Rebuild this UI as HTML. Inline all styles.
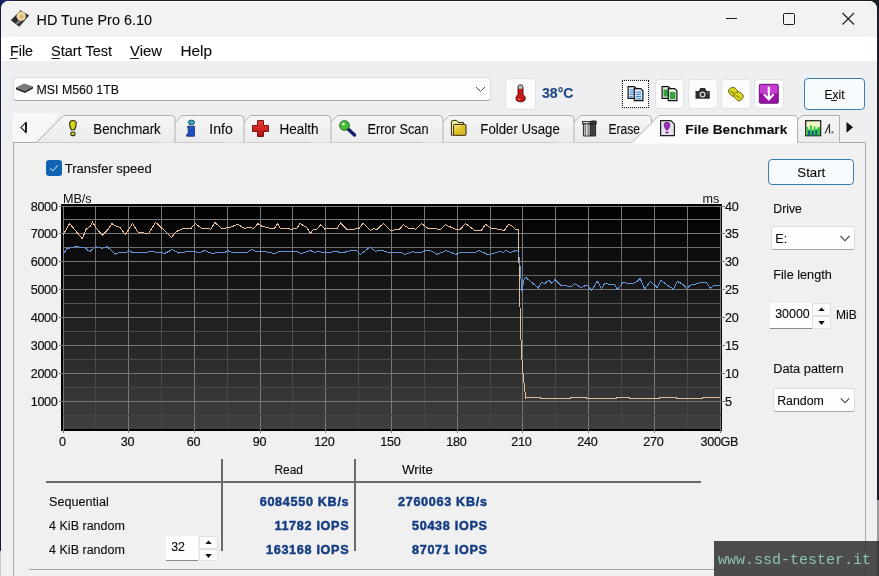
<!DOCTYPE html>
<html><head><meta charset="utf-8">
<style>
*{margin:0;padding:0;box-sizing:border-box}
html,body{width:879px;height:576px;overflow:hidden;background:#1b1d27;font-family:"Liberation Sans",sans-serif}
.a{position:absolute}
#win{position:absolute;left:1px;top:1px;width:876px;height:575px;background:#f0f0f0;border-radius:8px 8px 0 0;overflow:hidden}
.btn{position:absolute;background:#fcfcfc;border:1px solid #e1e1e1;border-radius:4px}
.combo{position:absolute;background:#fefefe;border:1px solid #dcdcdc;border-bottom-color:#a8a8a8;border-radius:3px}
svg{position:absolute;left:0;top:0;overflow:visible}
</style></head><body>
<div class="a" style="left:0;top:0;width:14px;height:14px;background:#1a2570"></div>
<div class="a" style="left:0;top:0;width:1px;height:551px;background:#141a3a"></div>
<div id="win">
 <div class="a" style="left:0;top:0;width:876px;height:36px;background:#f2f2f2;border-top:1px solid #fdfdfd"></div>
 <div class="a" style="left:0;top:36px;width:876px;height:24px;background:#ffffff"></div>
 <div class="a" style="left:0;top:60px;width:876px;height:82px;background:#eeeff1"></div>
</div>
<div class="a" style="left:0;top:551px;width:1px;height:25px;background:#c8c8c8"></div>
<div class="a" style="left:877px;top:500px;width:2px;height:41px;background:#9a9ca0"></div>

<!-- drive combo -->
<div class="combo" style="left:13px;top:77px;width:478px;height:24px"></div>
<!-- thermometer button -->
<div class="btn" style="left:505px;top:78px;width:31px;height:32px"></div>
<!-- toolbar buttons -->
<div class="btn" style="left:621px;top:79px;width:29px;height:30px"></div>
<div class="a" style="left:622px;top:80px;width:27px;height:28px;border:1px dotted #111"></div>
<div class="btn" style="left:655px;top:79px;width:29px;height:30px"></div>
<div class="btn" style="left:688px;top:79px;width:30px;height:30px"></div>
<div class="btn" style="left:721px;top:79px;width:30px;height:30px"></div>
<div class="btn" style="left:754px;top:79px;width:30px;height:30px"></div>
<!-- exit -->
<div class="a" style="left:804px;top:78px;width:61px;height:32px;border:1px solid #3a7fae;border-radius:4px;background:#f8fbfd"></div>

<!-- panel border -->
<div class="a" style="left:13px;top:142px;width:1px;height:434px;background:#adadad"></div>
<div class="a" style="left:865px;top:142px;width:1px;height:434px;background:#adadad"></div>

<!-- checkbox -->
<div class="a" style="left:46px;top:160px;width:16px;height:16px;background:#0f64b6;border-radius:3px"></div>

<!-- right controls -->
<div class="a" style="left:768px;top:159px;width:86px;height:26px;border:1px solid #3a7fae;border-radius:4px;background:#f8fbfd"></div>
<div class="combo" style="left:771px;top:226px;width:84px;height:24px"></div>
<div class="a" style="left:770px;top:303px;width:42px;height:26px;background:#fefefe;border-bottom:1px solid #8a8a8a"></div>
<div class="btn" style="left:812px;top:303px;width:19px;height:13px;border-radius:2px"></div>
<div class="btn" style="left:812px;top:316px;width:19px;height:13px;border-radius:2px"></div>
<div class="combo" style="left:773px;top:388px;width:82px;height:24px"></div>

<!-- results table boxes -->
<div class="a" style="left:46px;top:481px;width:655px;height:2px;background:#6b6b6b"></div>
<div class="a" style="left:221px;top:459px;width:2px;height:92px;background:#6b6b6b"></div>
<div class="a" style="left:354px;top:459px;width:2px;height:92px;background:#6b6b6b"></div>
<div class="a" style="left:166px;top:536px;width:32px;height:25px;background:#fefefe;border-bottom:1px solid #8a8a8a"></div>
<div class="btn" style="left:199px;top:536px;width:19px;height:13px;border-radius:2px"></div>
<div class="btn" style="left:199px;top:549px;width:19px;height:12px;border-radius:2px"></div>
<div class="a" style="left:29px;top:569px;width:836px;height:1px;background:#a5a5a5"></div>

<svg width="879" height="576" viewBox="0 0 879 576" style="will-change:transform">
 <defs>
  <linearGradient id="tg" x1="0" y1="0" x2="0" y2="1"><stop offset="0" stop-color="#f6f6f6"/><stop offset="1" stop-color="#ebebeb"/></linearGradient>
  <linearGradient id="cg" x1="0" y1="0" x2="0" y2="1"><stop offset="0" stop-color="#000"/><stop offset="1" stop-color="#3f3f3f"/></linearGradient>
  <linearGradient id="mg" gradientUnits="userSpaceOnUse" x1="0" y1="206" x2="0" y2="429"><stop offset="0" stop-color="#7a7a7a"/><stop offset="0.3" stop-color="#666666"/><stop offset="0.5" stop-color="#4e4e4e"/><stop offset="1" stop-color="#444444"/></linearGradient>
  <linearGradient id="crossg" x1="0" y1="0" x2="0" y2="1"><stop offset="0" stop-color="#f03838"/><stop offset="1" stop-color="#b01010"/></linearGradient>
  <linearGradient id="foldg" x1="0" y1="0" x2="1" y2="1"><stop offset="0" stop-color="#f6ee90"/><stop offset="0.5" stop-color="#e2c020"/><stop offset="1" stop-color="#d8b840"/></linearGradient>
  <linearGradient id="trashg" x1="0" y1="0" x2="1" y2="0"><stop offset="0" stop-color="#a0a0a0"/><stop offset="0.3" stop-color="#f4f4f4"/><stop offset="0.5" stop-color="#9a9a9a"/><stop offset="0.58" stop-color="#3a3a3a"/><stop offset="1" stop-color="#505050"/></linearGradient>
 </defs>

 <!-- title icon -->
 <path d="M11.1 20.2 L20.5 10.6 L28.8 15.6 L19.3 26.4 Z" fill="#2a2a2a" stroke="#3a3a3a" stroke-width="0.6" stroke-linejoin="round"/>
 <ellipse cx="18.6" cy="22" rx="3.2" ry="1.4" transform="rotate(-40 18.6 22)" fill="#9a9a9a" opacity="0.75"/>
 <circle cx="21.2" cy="16.3" r="4.7" fill="#ead49c"/>
 <circle cx="21.6" cy="16.6" r="1.7" fill="#cdb070"/>
 <!-- window controls -->
 <path d="M726 18.5 H737" stroke="#1c1c1c" stroke-width="1"/>
 <rect x="783.5" y="13.5" width="11" height="11" rx="1" fill="none" stroke="#1c1c1c" stroke-width="1"/>
 <path d="M842.5 13 L854 24.5 M854 13 L842.5 24.5" stroke="#1c1c1c" stroke-width="1.1"/>
 <!-- menu underlines -->
 <path d="M10 58.5 H17.5 M51.5 58.5 H60 M130 58.5 H139" stroke="#222" stroke-width="1"/>

 <!-- drive icon -->
 <g transform="translate(16,83)">
  <path d="M0 4.5 L8 0.5 L17 3.5 L9 8 Z" fill="#7a7a7a"/>
  <path d="M0 4.5 L9 8 L17 3.5 L17 5.5 L9 10 L0 6.5 Z" fill="#2a2a2a"/>
 </g>
 <path d="M476 87 L480.5 91.5 L485 87" stroke="#4a4a4a" stroke-width="1" fill="none"/>

 <!-- thermometer -->
 <g>
  <path d="M518 87 Q518 84.8 520.5 84.8 Q523 84.8 523 87 V94.5 Q525.3 96 525.3 98.2 Q525.3 101.8 520.6 101.8 Q516 101.8 516 98.2 Q516 96 518 94.5 Z" fill="#c81818" stroke="#4a0808" stroke-width="0.9"/>
  <rect x="518.6" y="85.5" width="3.8" height="3.2" fill="#8ed8d0"/>
  <path d="M518.8 98.5 L520 100" stroke="#f0c0c0" stroke-width="1"/>
 </g>
 <!-- copy icon -->
 <g transform="translate(627.5,86)">
  <path d="M0.6 0.6 H6.8 L8.8 2.6 V12.4 H0.6 Z" fill="#d8e8f8" stroke="#111" stroke-width="1.2"/>
  <path d="M2.2 4 H7 M2.2 6.2 H7 M2.2 8.4 H7 M2.2 10.6 H5" stroke="#3a80d0" stroke-width="1"/>
  <path d="M6.8 2.6 H13.2 L15.4 4.8 V14.6 H6.8 Z" fill="#d8e8f8" stroke="#111" stroke-width="1.2"/>
  <path d="M8.4 6.2 H13.6 M8.4 8.4 H13.6 M8.4 10.6 H13.6 M8.4 12.8 H13.6" stroke="#3a80d0" stroke-width="1"/>
 </g>
 <g transform="translate(661.5,86)">
  <path d="M0.6 0.6 H6.8 L8.8 2.6 V12.4 H0.6 Z" fill="#e8f0e0" stroke="#111" stroke-width="1.2"/>
  <rect x="2" y="3.5" width="5.4" height="7" fill="#38a040"/>
  <path d="M6.8 2.6 H13.2 L15.4 4.8 V14.6 H6.8 Z" fill="#e8f0e0" stroke="#111" stroke-width="1.2"/>
  <rect x="8.3" y="6" width="5.6" height="7.2" fill="#38a040"/>
 </g>
 <!-- camera -->
 <g transform="translate(695,87.5)">
  <path d="M0.5 3.5 H3.8 L5.3 0.5 H10 L11.5 3.5 H14.8 V11.2 H0.5 Z" fill="#2c2c2c"/>
  <circle cx="7.6" cy="7" r="3" fill="#d6d6d6"/><circle cx="7.6" cy="7" r="1.7" fill="#2c2c2c"/>
  <rect x="12" y="4.8" width="1.6" height="1.2" fill="#50c050"/>
 </g>
 <!-- yellow tool -->
 <g transform="translate(727.5,86.5)" stroke="#5a5a10" stroke-width="0.9" fill="#dcd620">
  <path d="M1 5.5 Q0.5 3 3 1.5 Q5.5 0 7.5 1.5 L10 4 Q11 6 9 8 L7.5 9.5 Q5 10.5 3.5 8.5 Z"/>
  <path d="M6.5 10 Q6 7.5 8.5 6 Q11 4.5 13 6 L15.5 8.5 Q16.5 10.5 14.5 12.5 L13 14 Q10.5 15 9 13 Z"/>
  <path d="M3 4.5 L6.5 7 M9 9 L12.5 11.5" stroke="#8a8a10" stroke-width="1.1"/>
 </g>
 <!-- purple download -->
 <g transform="translate(758.8,83.8)">
  <rect x="0.5" y="0.5" width="19" height="19" rx="1.2" fill="#9a10a8" stroke="#5a0868" stroke-width="0.8"/>
  <rect x="1.2" y="1.2" width="17.6" height="8.5" fill="#c43cd0"/>
  <path d="M10 3 V15.2 M5.2 10.4 L10 15.6 L14.8 10.4" stroke="#fff" stroke-width="2.2" fill="none"/>
 </g>
 <path d="M831 100.5 H837" stroke="#222" stroke-width="1"/>

 <!-- tab strip -->
 <path d="M13.5 142.5 H865.5" stroke="#acacac"/>
 <path d="M13 113 H60 L36 142 H13 Z" fill="#f8f8f8"/>
 <path d="M25.8 122.6 L20.9 127.4 L25.8 132.4 Z" fill="none" stroke="#1a1a1a" stroke-width="1.1"/><path d="M26 122.4 V132.6" stroke="#111" stroke-width="1.8"/>
 <path d="M797.5 142.5 V120 L802 115.5 H839.5 V142.5" fill="url(#tg)" stroke="#b0b0b0"/>
 <path d="M553.5 142.5 L581 115.5 H648 Q651.5 115.5 651.5 119 V142.5" fill="url(#tg)" stroke="#b0b0b0"/>
 <path d="M422 142.5 L449.5 115.5 H570 Q574 115.5 574 119 V142.5" fill="url(#tg)" stroke="#b0b0b0"/>
 <path d="M310 142.5 L337.5 115.5 H439.5 Q443 115.5 443 119 V142.5" fill="url(#tg)" stroke="#b0b0b0"/>
 <path d="M223 142.5 L250.5 115.5 H327.5 Q331 115.5 331 119 V142.5" fill="url(#tg)" stroke="#b0b0b0"/>
 <path d="M155 142.5 L182 115.5 H240.5 Q244 115.5 244 119 V142.5" fill="url(#tg)" stroke="#b0b0b0"/>
 <path d="M36.5 142.5 L63.5 115.5 H171.5 Q175 115.5 175 119 V142.5" fill="url(#tg)" stroke="#b0b0b0"/>
 <path d="M631.5 143 L659 115.5 H794 Q797.5 115.5 797.5 119 V143" fill="#fcfcfc" stroke="#b0b0b0"/>
 <rect x="632" y="142" width="165" height="1.6" fill="#fcfcfc"/>
 <path d="M846.5 122 L853 127.3 L846.5 132.7 Z" fill="#111"/>

 <!-- tab icons -->
 <g transform="translate(69,120)">
  <path d="M0.6 3.6 Q0.6 0.5 3.9 0.5 Q7.2 0.5 7.2 3.6 Q7.2 6.5 5.6 9.8 H2.2 Q0.6 6.5 0.6 3.6 Z" fill="#d4d41e" stroke="#2e2e08" stroke-width="1.1"/>
  <rect x="1.8" y="12" width="4.2" height="3.6" rx="1.4" fill="#cfd040" stroke="#2e2e08" stroke-width="1.1"/>
 </g>
 <g>
  <ellipse cx="191.4" cy="122.4" rx="3.1" ry="2.3" fill="#3aa6c8" stroke="#103a50" stroke-width="0.8"/>
  <path d="M187.6 126.2 H194.4 V136.2 H186.6 V134.8 Q188.2 134.2 188.2 132.5 V127.6 H187.6 Z" fill="#1f4fc4" stroke="#0c2060" stroke-width="0.8"/>
 </g>
 <path d="M257.5 120.5 H263.5 V125.5 H268.5 V131.5 H263.5 V136.5 H257.5 V131.5 H252.5 V125.5 H257.5 Z" fill="url(#crossg)" stroke="#6a0c0c" stroke-width="0.9" stroke-linejoin="round"/>
 <g transform="translate(339,120)">
  <path d="M8 8 L15.5 15" stroke="#1a1a70" stroke-width="3.4" stroke-linecap="round"/>
  <circle cx="5.5" cy="5.5" r="4.8" fill="#44c038" stroke="#1e5a14" stroke-width="1"/>
  <circle cx="4.3" cy="4" r="1.6" fill="#b8f0a8"/>
 </g>
 <g stroke="#2e2608" stroke-width="1">
  <path d="M451.4 135.2 V122.2 Q451.4 120.4 453.2 120.4 H456.6 L458.2 122.4 H463.4 V124.6" fill="#f2ee9a"/>
  <rect x="453.6" y="124.4" width="12.4" height="10.9" rx="0.8" fill="url(#foldg)"/>
  <path d="M451.4 135.2 H454" />
 </g>
 <g>
  <path d="M582.8 121.5 H591.5 V120.6 H596 V122 Z" fill="#333"/>
  <rect x="582.6" y="121.4" width="13.6" height="2.6" fill="url(#trashg)" stroke="#1a1a1a" stroke-width="0.8"/>
  <path d="M583.4 124 H595.6 V136 H583.4 Z" fill="url(#trashg)" stroke="#1a1a1a" stroke-width="0.9"/>
  <path d="M585.6 125 V135.5 M588 125 V135.5 M590.6 125 V135.5 M593.2 125 V135.5" stroke="#2a2a2a" stroke-width="0.7" opacity="0.8"/>
 </g>
 <g>
  <path d="M660.6 120.6 H670.8 L674.4 124.2 V135.6 H660.6 Z" fill="#e6e2ee" stroke="#1e1e1e" stroke-width="1.2"/>
  <path d="M664.2 124.8 Q664.2 122.2 667 122.2 Q669.8 122.2 669.8 124.8 Q669.8 127 668.6 128.4 L668 129.8 H666 L665.4 128.4 Q664.2 127 664.2 124.8 Z" fill="#a02cc0" stroke="#5a1070" stroke-width="0.7"/>
  <rect x="665.6" y="131.6" width="2.8" height="1.8" fill="#8a2aa0"/>
 </g>
 <g>
  <rect x="805.7" y="120.7" width="15" height="15" fill="#eef6c4" stroke="#1a1a1a" stroke-width="1.2"/>
  <path d="M806.4 135.2 V127 H808.2 V129.4 H810 V125.2 H811.8 V129.8 H813.6 V126.4 H815.4 V129.2 H817.2 V127.2 H820 V135.2 Z" fill="#2cc83c"/>
  <path d="M808.2 135.2 V130.4 H810 V135.2 Z M811.8 135.2 V131 H813.6 V135.2 Z M815.4 135.2 V130.2 H817.2 V135.2 Z" fill="#1a4aa0"/>
 </g>
 <path d="M825 133.5 L829.5 124 M829.5 124 V133.5" stroke="#333" stroke-width="1.2" fill="none"/>
 <rect x="831.5" y="131.5" width="1.8" height="1.8" fill="#555"/>

 <!-- checkbox check -->
 <path d="M50.2 168.4 L52.8 170.9 L57.9 165.2" stroke="#e6f4ff" stroke-width="1" fill="none"/>

 <!-- chart -->
 <rect x="61" y="204" width="661" height="227" fill="#000"/>
 <rect x="63" y="206" width="657" height="223" fill="url(#cg)"/>
 <g stroke-width="1" fill="none"><path d="M63.5 206 V433" stroke="#787878"/><path d="M95.5 206 V429" stroke="url(#mg)"/><path d="M128.5 206 V433" stroke="#787878"/><path d="M161.5 206 V429" stroke="url(#mg)"/><path d="M194.5 206 V433" stroke="#787878"/><path d="M227.5 206 V429" stroke="url(#mg)"/><path d="M260.5 206 V433" stroke="#787878"/><path d="M292.5 206 V429" stroke="url(#mg)"/><path d="M325.5 206 V433" stroke="#787878"/><path d="M358.5 206 V429" stroke="url(#mg)"/><path d="M391.5 206 V433" stroke="#787878"/><path d="M424.5 206 V429" stroke="url(#mg)"/><path d="M457.5 206 V433" stroke="#787878"/><path d="M490.5 206 V429" stroke="url(#mg)"/><path d="M522.5 206 V433" stroke="#787878"/><path d="M555.5 206 V429" stroke="url(#mg)"/><path d="M588.5 206 V433" stroke="#787878"/><path d="M621.5 206 V429" stroke="url(#mg)"/><path d="M654.5 206 V433" stroke="#787878"/><path d="M687.5 206 V429" stroke="url(#mg)"/><path d="M720.5 206 V433" stroke="#787878"/><path d="M59 206.5 H725" stroke="#787878"/><path d="M63 219.5 H721" stroke="url(#mg)"/><path d="M59 233.5 H725" stroke="#787878"/><path d="M63 247.5 H721" stroke="url(#mg)"/><path d="M59 261.5 H725" stroke="#787878"/><path d="M63 275.5 H721" stroke="url(#mg)"/><path d="M59 289.5 H725" stroke="#787878"/><path d="M63 303.5 H721" stroke="url(#mg)"/><path d="M59 317.5 H725" stroke="#787878"/><path d="M63 331.5 H721" stroke="url(#mg)"/><path d="M59 345.5 H725" stroke="#787878"/><path d="M63 359.5 H721" stroke="url(#mg)"/><path d="M59 373.5 H725" stroke="#787878"/><path d="M63 387.5 H721" stroke="url(#mg)"/><path d="M59 401.5 H725" stroke="#787878"/><path d="M63 415.5 H721" stroke="url(#mg)"/></g>
 <g font-size="12.6" fill="#111" stroke="#111" stroke-width="0.2" letter-spacing="-0.3"><text x="57.5" y="405.8" text-anchor="end">1000</text><text x="57.5" y="377.8" text-anchor="end">2000</text><text x="57.5" y="349.8" text-anchor="end">3000</text><text x="57.5" y="321.8" text-anchor="end">4000</text><text x="57.5" y="293.8" text-anchor="end">5000</text><text x="57.5" y="265.8" text-anchor="end">6000</text><text x="57.5" y="237.8" text-anchor="end">7000</text><text x="57.5" y="210.8" text-anchor="end">8000</text><text x="725" y="405.8">5</text><text x="725" y="377.8">10</text><text x="725" y="349.8">15</text><text x="725" y="321.8">20</text><text x="725" y="293.8">25</text><text x="725" y="265.8">30</text><text x="725" y="237.8">35</text><text x="725" y="210.8">40</text><text x="62.4" y="445.8" text-anchor="middle">0</text><text x="127.4" y="445.8" text-anchor="middle">30</text><text x="193.4" y="445.8" text-anchor="middle">60</text><text x="259.4" y="445.8" text-anchor="middle">90</text><text x="324.4" y="445.8" text-anchor="middle">120</text><text x="390.4" y="445.8" text-anchor="middle">150</text><text x="456.4" y="445.8" text-anchor="middle">180</text><text x="521.4" y="445.8" text-anchor="middle">210</text><text x="587.4" y="445.8" text-anchor="middle">240</text><text x="653.4" y="445.8" text-anchor="middle">270</text><text x="700.5" y="445.8">300GB</text></g>
 <text x="62.9" y="202.6" font-size="12.6" fill="#111">MB/s</text>
 <text x="702.5" y="202.8" font-size="12.6" fill="#111">ms</text>
 <polyline fill="none" stroke="#e8ba94" stroke-width="1" shape-rendering="crispEdges" points="63.2,234.7 69.6,223.5 82.3,238.7 86.3,228.8 89.5,227.5 92.6,222.0 95.8,227.5 102.2,235.2 107.8,229.9 111.8,223.5 115.7,225.9 119.7,227.2 125.3,234.7 132.5,223.5 138.0,232.3 148.4,233.6 155.6,222.4 159.5,225.9 171.5,237.4 176.3,231.5 182.6,228.8 190.6,228.8 195.4,223.5 201.4,228.3 210.9,229.1 214.9,222.4 221.3,228.3 229.2,227.8 237.7,224.3 244.4,228.3 249.9,227.5 253.9,228.3 257.9,223.5 261.9,226.4 269.1,228.0 274.6,228.3 277.5,223.5 280.2,228.3 289.0,228.8 291.4,229.4 296.9,228.3 300.1,223.5 306.5,227.5 310.5,233.1 313.6,229.1 316.8,229.4 320.8,224.7 324.8,229.1 330.0,228.3 337.2,228.3 340.4,223.1 346.7,229.4 358.7,228.8 363.1,223.1 370.6,230.4 373.8,228.8 377.0,229.4 383.4,223.5 390.5,230.4 399.3,229.4 403.3,224.7 408.8,228.3 416.0,229.1 421.6,223.5 428.7,228.8 440.7,229.1 445.5,224.7 455.8,229.4 460.6,229.1 465.4,223.5 474.6,230.4 481.5,230.4 485.4,224.3 490.2,227.8 497.1,229.1 504.5,230.4 508.4,224.3 511.5,225.6 515.4,229.1 518.4,229.5 519.5,290.0 521.0,340.0 522.5,370.0 524.4,386.0 525.6,398.0 540.0,397.5 541.0,398.5 570.0,398.5 571.0,397.5 586.0,397.5 587.0,398.5 616.0,398.5 617.0,397.5 629.0,397.5 630.0,398.5 659.0,398.5 660.0,397.5 676.0,397.5 677.0,398.5 702.0,398.5 703.0,397.5 720.0,397.5"/>
 <polyline fill="none" stroke="#6494d6" stroke-width="1" shape-rendering="crispEdges" points="63.2,254.6 66.4,249.0 75.9,246.6 85.5,247.9 89.5,251.7 95.8,246.6 102.2,248.2 107.0,246.6 115.7,254.3 119.7,252.2 125.3,253.0 129.3,250.6 133.3,253.0 152.4,251.7 165.1,253.3 172.3,249.5 178.6,253.0 187.4,251.7 195.4,251.7 198.2,253.0 204.6,250.6 211.7,253.3 225.3,252.2 227.6,250.6 233.2,253.0 241.2,252.7 247.6,252.2 251.5,249.5 255.5,251.1 261.9,251.7 269.9,252.2 274.6,253.8 279.4,251.4 287.4,251.7 296.9,251.1 300.9,253.8 310.5,250.6 314.4,252.2 319.2,251.7 325.6,252.7 330.0,252.2 336.4,251.4 341.9,253.0 350.7,250.6 356.3,250.6 360.3,254.3 369.8,247.4 375.4,251.1 382.6,250.6 388.9,252.7 400.1,252.2 404.9,254.3 412.8,251.7 419.2,253.0 425.6,250.6 431.9,251.1 436.7,254.3 446.3,250.6 455.8,254.3 460.6,252.2 475.4,252.6 478.9,250.4 488.0,254.7 494.1,253.4 499.7,251.3 503.2,252.6 505.8,250.4 510.2,252.6 516.2,250.4 518.4,251.7 520.5,270.0 521.7,290.0 522.5,293.0 523.2,281.7 525.3,277.0 538.3,287.9 541.5,282.2 544.6,283.8 548.8,280.1 551.9,283.2 555.0,279.6 561.2,285.8 565.5,285.8 570.9,286.7 574.6,283.7 581.0,287.6 586.4,285.2 588.2,285.9 591.4,290.5 597.3,281.2 601.4,288.8 604.6,283.7 614.6,284.6 617.3,289.4 622.8,282.5 632.8,283.9 638.3,280.5 640.1,278.3 644.7,289.1 650.4,281.4 657.0,287.5 661.1,280.4 667.8,285.5 673.4,289.1 677.5,281.4 683.1,284.5 686.7,288.5 690.8,285.0 696.4,283.9 700.5,282.4 706.7,282.9 710.8,288.5 713.8,285.5 720.0,285.3"/>

 <!-- chevrons -->
 <path d="M840.5 236 L845 240.8 L849.5 236" stroke="#444" stroke-width="1.1" fill="none"/>
 <path d="M840.8 398.3 L845 402.8 L849.2 398.3" stroke="#444" stroke-width="1.1" fill="none"/>
 <!-- spinner triangles -->
 <path d="M818.3 311 L821.5 307.5 L824.8 311 Z M818.3 321 L821.5 325 L824.8 321 Z" fill="#111"/>
 <path d="M205.3 544 L208.5 540.4 L211.8 544 Z M205.3 554 L208.5 558 L211.8 554 Z" fill="#111"/>

 <g fill="#0c0c0c" stroke="#0c0c0c" stroke-width="0.12">
<text x="36.5" y="24.9" font-size="15.3" textLength="115.5" lengthAdjust="spacingAndGlyphs">HD Tune Pro 6.10</text>
<text x="10" y="56" font-size="14" textLength="23" lengthAdjust="spacingAndGlyphs">File</text>
<text x="51" y="56" font-size="14" textLength="61" lengthAdjust="spacingAndGlyphs">Start Test</text>
<text x="130" y="56" font-size="14" textLength="32" lengthAdjust="spacingAndGlyphs">View</text>
<text x="180.5" y="56" font-size="14" textLength="31.5" lengthAdjust="spacingAndGlyphs">Help</text>
<text x="36.5" y="93.7" font-size="12.5" textLength="82.5" lengthAdjust="spacingAndGlyphs">MSI M560 1TB</text>
<text x="542" y="98.2" font-size="14" textLength="31.5" lengthAdjust="spacingAndGlyphs" font-weight="bold" fill="#1f4c92">38°C</text>
<text x="824.5" y="98.8" font-size="12" textLength="20" lengthAdjust="spacingAndGlyphs">Exit</text>
<text x="93.3" y="133.8" font-size="14" textLength="67.5" lengthAdjust="spacingAndGlyphs">Benchmark</text>
<text x="209.3" y="133.8" font-size="14" textLength="23.5" lengthAdjust="spacingAndGlyphs">Info</text>
<text x="279.5" y="133.8" font-size="14" textLength="39" lengthAdjust="spacingAndGlyphs">Health</text>
<text x="367.5" y="133.8" font-size="14" textLength="61" lengthAdjust="spacingAndGlyphs">Error Scan</text>
<text x="480.3" y="133.8" font-size="14" textLength="79.5" lengthAdjust="spacingAndGlyphs">Folder Usage</text>
<text x="608.5" y="133.8" font-size="14" textLength="31.5" lengthAdjust="spacingAndGlyphs">Erase</text>
<text x="685.3" y="133.8" font-size="13.4" textLength="102" lengthAdjust="spacingAndGlyphs" font-weight="bold" fill="#111">File Benchmark</text>
<text x="64.8" y="173" font-size="13.4" textLength="87" lengthAdjust="spacingAndGlyphs">Transfer speed</text>
<text x="797.3" y="177.2" font-size="13" textLength="28" lengthAdjust="spacingAndGlyphs">Start</text>
<text x="773.3" y="213" font-size="12.2" textLength="28.6" lengthAdjust="spacingAndGlyphs">Drive</text>
<text x="775.3" y="243.1" font-size="12.5">E:</text>
<text x="773.3" y="278.9" font-size="12.5" textLength="58.5" lengthAdjust="spacingAndGlyphs">File length</text>
<text x="775.2" y="318" font-size="12.5" textLength="34.5" lengthAdjust="spacingAndGlyphs">30000</text>
<text x="836" y="318.9" font-size="12">MiB</text>
<text x="773.2" y="373" font-size="12.5" textLength="70.5" lengthAdjust="spacingAndGlyphs">Data pattern</text>
<text x="777.2" y="404.8" font-size="12.5" textLength="46.6" lengthAdjust="spacingAndGlyphs">Random</text>
<text x="274.4" y="474" font-size="12.5" textLength="28.5" lengthAdjust="spacingAndGlyphs">Read</text>
<text x="401.9" y="474" font-size="12.5" textLength="31" lengthAdjust="spacingAndGlyphs">Write</text>
<text x="49.1" y="505.8" font-size="12.5" textLength="59.6" lengthAdjust="spacingAndGlyphs">Sequential</text>
<text x="49.1" y="529.9" font-size="12.5" textLength="75.8" lengthAdjust="spacingAndGlyphs">4 KiB random</text>
<text x="49.1" y="554" font-size="12.5" textLength="75.8" lengthAdjust="spacingAndGlyphs">4 KiB random</text>
<text x="171.2" y="550.7" font-size="12.5" textLength="13.8" lengthAdjust="spacingAndGlyphs">32</text>
<text x="349.3" y="505.8" font-size="12.6" text-anchor="end" font-weight="bold" fill="#163e84" letter-spacing="0.7" stroke="#163e84" stroke-width="0.5">6084550 KB/s</text>
<text x="349.3" y="529.9" font-size="12.6" text-anchor="end" font-weight="bold" fill="#163e84" letter-spacing="0.7" stroke="#163e84" stroke-width="0.5">11782 IOPS</text>
<text x="349.3" y="553.8" font-size="12.6" text-anchor="end" font-weight="bold" fill="#163e84" letter-spacing="0.7" stroke="#163e84" stroke-width="0.5">163168 IOPS</text>
<text x="487.6" y="505.8" font-size="12.6" text-anchor="end" font-weight="bold" fill="#163e84" letter-spacing="0.7" stroke="#163e84" stroke-width="0.5">2760063 KB/s</text>
<text x="487.6" y="529.9" font-size="12.6" text-anchor="end" font-weight="bold" fill="#163e84" letter-spacing="0.7" stroke="#163e84" stroke-width="0.5">50438 IOPS</text>
<text x="487.6" y="553.8" font-size="12.6" text-anchor="end" font-weight="bold" fill="#163e84" letter-spacing="0.7" stroke="#163e84" stroke-width="0.5">87071 IOPS</text>
 </g>
</svg>

<!-- watermark -->
<div class="a" style="left:714px;top:541px;width:165px;height:35px;background:rgba(62,62,62,0.92)"></div>
<svg width="879" height="576" viewBox="0 0 879 576">
 <text x="718" y="563.5" font-family="Liberation Mono" font-size="15" fill="#8dc3a6" textLength="153">www.ssd-tester.it</text>
</svg>
</body></html>
